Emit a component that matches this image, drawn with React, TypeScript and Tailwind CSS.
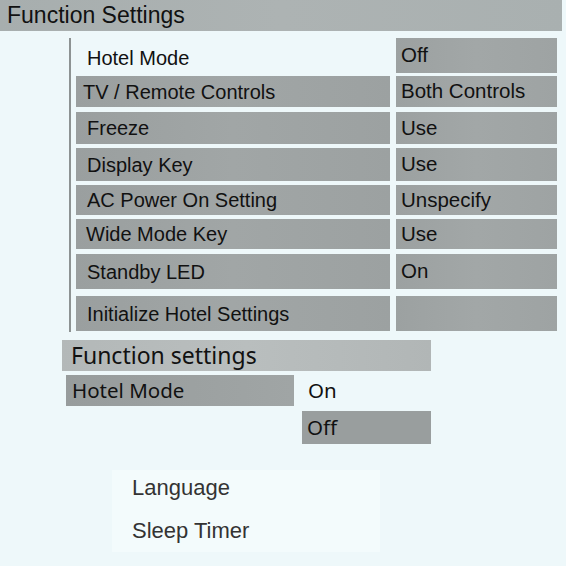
const rows = [
  { label: "Hotel Mode", value: "Off", mt: "mt-[7px]", h: "h-[35px]", plain: true },
  { label: "TV / Remote Controls", value: "Both Controls", mt: "mt-[3px]", h: "h-[31px]", pl: "pl-[7px]" },
  { label: "Freeze", value: "Use", mt: "mt-[5px]", h: "h-[32px]" },
  { label: "Display Key", value: "Use", mt: "mt-[4px]", h: "h-[33px]" },
  { label: "AC Power On Setting", value: "Unspecify", mt: "mt-[4px]", h: "h-[30px]" },
  { label: "Wide Mode Key", value: "Use", mt: "mt-[4px]", h: "h-[30px]", pl: "pl-[10px]" },
  { label: "Standby LED", value: "On", mt: "mt-[5px]", h: "h-[35px]" },
  { label: "Initialize Hotel Settings", value: "", mt: "mt-[7px]", h: "h-[35px]" },
];

export default function App() {
  return (
    <div className="w-[566px] h-[566px] bg-[#eef8fa] text-[#111] overflow-hidden" style={{ fontFamily: '"Liberation Sans", Arial, sans-serif' }}>
      {/* top header */}
      <div className="w-[562px] h-[31px] bg-gradient-to-r from-[#a7aeae] via-[#adb3b3] to-[#a9b0b0] flex items-center pl-[7px] text-[23px]">
        Function Settings
      </div>

      {/* settings list */}
      <div className="ml-[69px] w-[488px] border-l-2 border-[#8d9393] pl-[5px] pb-[1px]">
        {rows.map((r) => (
          <div key={r.label} className={`flex gap-[6px] ${r.mt} ${r.h}`}>
            <div
              className={`w-[314px] flex items-center text-[20px] ${r.pl ?? "pl-[11px]"} ${
                r.plain ? "pt-[4px]" : "bg-gradient-to-r from-[#9a9f9f] via-[#a1a6a6] to-[#9ca1a1]"
              }`}
            >
              {r.label}
            </div>
            <div className="w-[161px] flex items-center pl-[5px] text-[20.5px] bg-gradient-to-r from-[#9ca1a1] via-[#a2a7a7] to-[#9ea3a3]">
              {r.value}
            </div>
          </div>
        ))}
      </div>

      {/* second panel */}
      <div className="ml-[62px] mt-[8px]" style={{ fontFamily: '"Noto Sans", "Open Sans", sans-serif' }}>
        <div className="w-[369px] h-[31px] bg-gradient-to-r from-[#b3b8b8] via-[#b9bebe] to-[#b1b6b6] flex items-center pl-[9px] text-[23px]">
          Function settings
        </div>
        <div className="flex mt-[4px] h-[31px]">
          <div className="ml-[4px] w-[228px] bg-gradient-to-r from-[#979c9c] to-[#a0a5a5] flex items-center pl-[6px] text-[20.5px]">
            Hotel Mode
          </div>
          <div className="flex items-center pl-[14px] text-[20.5px]">On</div>
        </div>
        <div className="ml-[240px] mt-[5px] w-[129px] h-[33px] bg-[#999e9e] flex items-center pl-[5px] text-[20.5px]">
          Off
        </div>
      </div>

      {/* bottom menu */}
      <div className="ml-[112px] mt-[26px] w-[268px] h-[82px] bg-[#f3fbfc] pl-[20px] pt-[3px] text-[22px] text-[#333] flex flex-col gap-[13px]">
        <div className="leading-[30px]">Language</div>
        <div className="leading-[30px]">Sleep Timer</div>
      </div>
    </div>
  );
}
